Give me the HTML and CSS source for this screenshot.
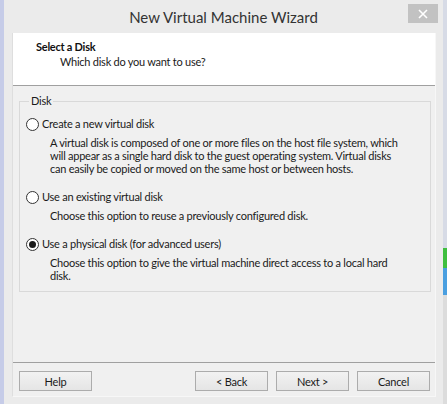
FILE: index.html
```html
<!DOCTYPE html>
<html>
<head>
<meta charset="utf-8">
<link rel="stylesheet" href="styles.css">
</head>
<body>
<div class="window">
  <div class="titlebar">
    <div class="title">New Virtual Machine Wizard</div>
    <div class="close">
      <svg width="10" height="10" viewBox="0 0 10 10"><path d="M1 1 L9 9 M9 1 L1 9" stroke="#fff" stroke-width="1.6" fill="none"/></svg>
    </div>
  </div>
  <div class="client">
    <div class="header">
      <div class="h-title">Select a Disk</div>
      <div class="h-sub">Which disk do you want to use?</div>
    </div>
    <div class="main">
      <fieldset class="group">
        <legend>Disk</legend>
        <div class="option">
          <div class="row"><span class="radio"></span><span>Create a new virtual disk</span></div>
          <div class="desc">A virtual disk is composed of one or more files on the host file system, which will appear as a single hard disk to the guest operating system. Virtual disks can easily be copied or moved on the same host or between hosts.</div>
        </div>
        <div class="option">
          <div class="row"><span class="radio"></span><span>Use an existing virtual disk</span></div>
          <div class="desc">Choose this option to reuse a previously configured disk.</div>
        </div>
        <div class="option">
          <div class="row"><span class="radio checked"></span><span>Use a physical disk (for advanced users)</span></div>
          <div class="desc">Choose this option to give the virtual machine direct access to a local hard disk.</div>
        </div>
      </fieldset>
    </div>
    <div class="footer">
      <button class="btn help">Help</button>
      <button class="btn">&lt; Back</button>
      <button class="btn">Next &gt;</button>
      <button class="btn">Cancel</button>
    </div>
  </div>
</div>
<div class="desk-edge"></div>
</body>
</html>
```
FILE: styles.css
```css
html, body {
  margin: 0;
  padding: 0;
}
body {
  width: 447px;
  height: 404px;
  overflow: hidden;
  display: flex;
  background: #c6cce8;
  font-family: Lato, "Liberation Sans", sans-serif;
  font-size: 11px;
  letter-spacing: -0.25px;
  color: #1a1a1a;
}
.window {
  margin-left: 4px;
  width: 439px;
  height: 404px;
  background: #ebebeb;
  display: flex;
  flex-direction: column;
}
.desk-edge {
  flex: 1;
  background: linear-gradient(to bottom, #d7dbe6 0, #d7dbe6 248px, #3fbf3f 248px, #3fbf3f 268px, #4a9fe0 268px, #4a9fe0 295px, #dcdcdc 295px);
}
.titlebar {
  height: 33px;
  display: grid;
  grid-template-columns: 1fr auto 1fr;
  align-items: start;
}
.title {
  grid-column: 2;
  font-size: 15px;
  line-height: 18px;
  letter-spacing: 0;
  color: #333;
  padding-top: 8px;
}
.close {
  grid-column: 3;
  justify-self: end;
  margin-top: 4px;
  margin-right: 5px;
  width: 30px;
  height: 19px;
  background: #c2c2c2;
  display: flex;
  align-items: center;
  justify-content: center;
}
.close svg {
  display: block;
}
.client {
  margin: 0 7px 7px 8px;
  flex: 1;
  background: #f0f0f0;
  border-left: 1px solid #dedede;
  border-right: 1px solid #f7f7f7;
  border-bottom: 1px solid #f7f7f7;
  display: flex;
  flex-direction: column;
}
.header {
  background: #fff;
  border-bottom: 1px solid #a0a0a0;
  padding-left: 23px;
  box-sizing: border-box;
  height: 53px;
}
.h-title {
  font-weight: bold;
  padding-top: 7px;
  line-height: 14px;
  color: #111;
}
.h-sub {
  padding-left: 24px;
  line-height: 14px;
  padding-top: 1px;
}
.main {
  flex: 1;
  padding: 0 4px 0 6px;
}
.group {
  margin: 8px 0 0 0;
  padding: 9px 6px 9px 6px;
  border: 1px solid #d9d9d9;
  min-width: 0;
}
.group legend {
  padding: 0 2px;
  margin-left: 3px;
  line-height: 14px;
}
.option + .option {
  margin-top: 15px;
}
.row {
  display: flex;
  align-items: center;
  gap: 3px;
  line-height: 14px;
}
.radio {
  width: 13px;
  height: 13px;
  box-sizing: border-box;
  border: 1px solid #333;
  border-radius: 50%;
  background: #fff;
  display: flex;
  align-items: center;
  justify-content: center;
}
.radio.checked::after {
  content: "";
  width: 7px;
  height: 7px;
  border-radius: 50%;
  background: #1a1a1a;
}
.desc {
  margin-top: 5px;
  margin-left: 24px;
  line-height: 13px;
  padding-right: 20px;
}
.footer {
  border-top: 1px solid #a0a0a0;
  height: 34px;
  box-sizing: border-box;
  display: flex;
  gap: 8px;
  padding: 8px 5px 0 6px;
}
.btn {
  width: 73px;
  height: 20px;
  border: 1px solid #acacac;
  background: linear-gradient(to bottom, #f2f2f2, #e5e5e5);
  font-family: Lato, "Liberation Sans", sans-serif;
  font-size: 11px;
  letter-spacing: -0.25px;
  color: #1a1a1a;
  padding: 0;
}
.btn.help {
  margin-right: auto;
}
```
